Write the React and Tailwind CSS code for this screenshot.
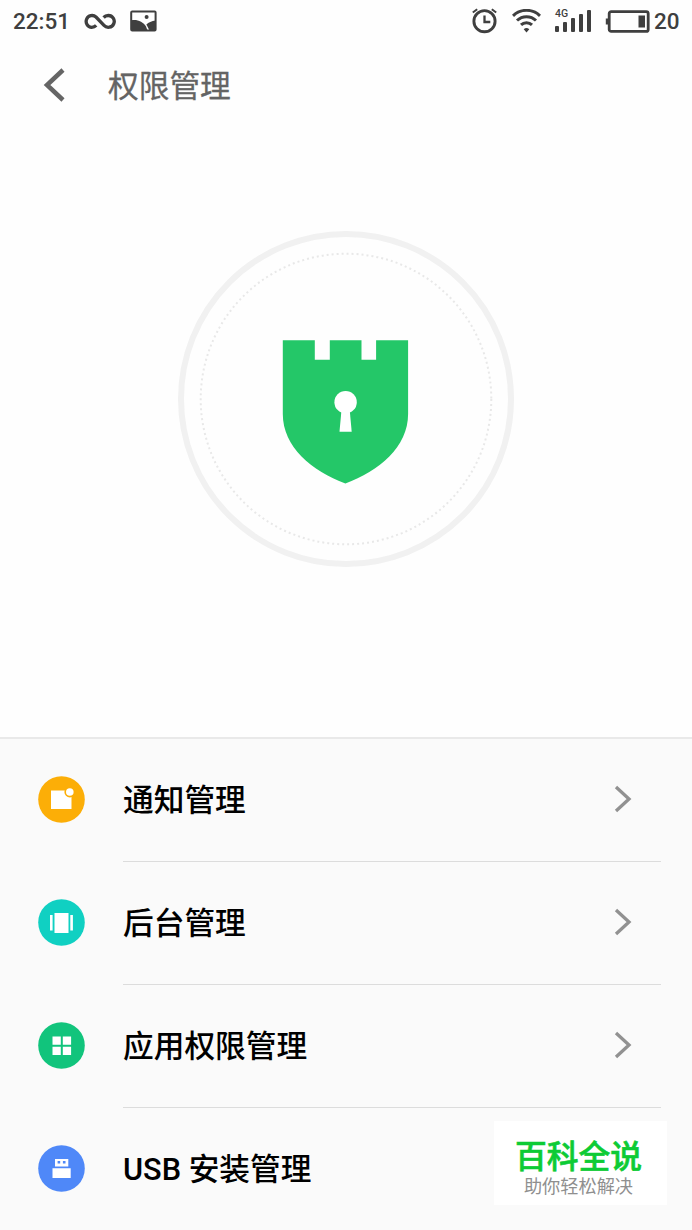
import { useState } from 'react';

const menuItems = [
  { id: 'notify', label: '通知管理', Icon: NotifyIcon },
  { id: 'background', label: '后台管理', Icon: BackgroundIcon },
  { id: 'apps', label: '应用权限管理', Icon: AppsIcon },
  { id: 'usb', label: 'USB 安装管理', Icon: UsbIcon },
];

function NotifyIcon() {
  return (
    <svg className="w-[47px] h-[47px] -mt-0.5" viewBox="0 0 47 47">
      <circle cx="23.5" cy="23.5" r="23.3" fill="#fcae07" />
      <path d="M13 14.5h20.5V33H13z" fill="#fff" />
      <circle cx="31.8" cy="16" r="5.4" fill="#fcae07" />
      <circle cx="31.8" cy="16" r="3.8" fill="#fff" />
    </svg>
  );
}

function BackgroundIcon() {
  return (
    <svg className="w-[47px] h-[47px] -mt-0.5" viewBox="0 0 47 47">
      <circle cx="23.5" cy="23.5" r="23.3" fill="#10d0c2" />
      <path d="M16.5 14h14v20h-14zM12 16h2.6v15.5H12zM32.3 16h2.6v15.5h-2.6z" fill="#fff" />
    </svg>
  );
}

function AppsIcon() {
  return (
    <svg className="w-[47px] h-[47px] -mt-0.5" viewBox="0 0 47 47">
      <circle cx="23.5" cy="23.5" r="23.3" fill="#11c47c" />
      <path d="M14.5 14.5h8.3v8.3h-8.3zM24.8 14.5h8.3v8.3h-8.3zM14.5 24.8h8.3v8.2h-8.3zM24.8 24.8h8.3v8.2h-8.3z" fill="#fff" />
    </svg>
  );
}

function UsbIcon() {
  return (
    <svg className="w-[47px] h-[47px] -mt-0.5" viewBox="0 0 47 47">
      <circle cx="23.5" cy="23.5" r="23.3" fill="#4f88f8" />
      <path d="M17 14h13.3v7.4H17zM14.5 23.2h18.2v9.9H14.5z" fill="#fff" />
      <path d="M19.6 16h2.6v2.6h-2.6zM24.9 16h2.6v2.6h-2.6z" fill="#4f88f8" />
    </svg>
  );
}

const StatusBar = () => (
  <div className="h-[43px] flex items-center justify-between px-[13px] text-[#3f3f3f] font-['Roboto',sans-serif] font-medium text-[22.5px]">
    <div className="flex items-center">
      <span className="w-[57px] pt-px">22:51</span>
      {/* Infinity */}
      <svg className="w-8 h-[18px] ml-[14px] mb-[2px]" viewBox="0 0 32 18" fill="none" stroke="currentColor" strokeWidth="3.3">
        <path d="M12.2 13.4C10.8 14.9 9.2 15.3 7.7 15.3A5.9 5.9 0 1 1 12 5L20 13.4A5.9 5.9 0 1 0 24.3 3.5C22.5 3.5 21 4 19.6 5.5" />
      </svg>
      {/* Picture */}
      <svg className="w-[27px] h-[22px] ml-[14px] mb-[2px]" viewBox="0 0 27 22">
        <rect x="1.2" y="1.4" width="24.4" height="19" rx="1" fill="#fff" stroke="currentColor" strokeWidth="2" />
        <path d="M1 10.5C7 9 13 12 16 16.5L17.5 20.6H1z" fill="currentColor" />
        <path d="M25.6 10.5C21.5 11 18.5 12.5 16.4 14.5L19.5 20.6h6z" fill="currentColor" />
        <circle cx="16.6" cy="6.9" r="2" fill="currentColor" />
      </svg>
    </div>
    <div className="flex items-center">
      {/* Alarm */}
      <svg className="w-[26px] h-[26px] mb-[2px]" viewBox="0 0 26 26" fill="none" stroke="currentColor">
        <circle cx="12.5" cy="13.2" r="10.6" strokeWidth="2.9" />
        <path d="M12.5 7.5v6.5h5.8" strokeWidth="2.3" />
        <path d="M.8 4.5 5.2 1.2M19.8 1.2l4.4 3.3" strokeWidth="2" />
      </svg>
      {/* Wifi */}
      <svg className="w-[29px] h-[24px] ml-[14px] mb-[2px]" viewBox="0 0 29 24" fill="none" stroke="currentColor" strokeWidth="3">
        <path d="M1 6.8a19.4 19.4 0 0 1 27 0" />
        <path d="M5 11.5a13.7 13.7 0 0 1 19 0" />
        <path d="M9 15.9a8 8 0 0 1 11 0" />
        <path d="M11.7 20.3 14.5 23.6l2.8-3.3a4.2 4.2 0 0 0-5.6 0z" fill="currentColor" stroke="none" />
      </svg>
      {/* Signal */}
      <div className="relative ml-[14px] mb-[2px] flex items-end gap-[4px] h-[23px] w-[36px]">
        <span className="absolute left-0 top-0 text-[10.5px] leading-[10px] font-medium">4G</span>
        <span className="w-[4px] h-[6px] rounded-[1px] bg-[#3f3f3f]" />
        <span className="w-[4px] h-[10px] rounded-[1px] bg-[#3f3f3f]" />
        <span className="w-[4px] h-[14px] rounded-[1px] bg-[#3f3f3f]" />
        <span className="w-[4px] h-[18px] rounded-[1px] bg-[#3f3f3f]" />
        <span className="w-[4px] h-[22px] rounded-[1px] bg-[#3f3f3f]" />
      </div>
      {/* Battery */}
      <svg className="w-[45px] h-[23px] ml-[14px] mb-px" viewBox="0 0 45 23">
        <rect x="4.2" y="1.6" width="39" height="19.8" rx="2" fill="none" stroke="currentColor" strokeWidth="2.8" />
        <path d="M.8 8.5h2.6v6H.8zM33.5 5.5H40v12h-6.5z" fill="currentColor" />
      </svg>
      <span className="ml-[4px] w-[25px] pt-px">20</span>
    </div>
  </div>
);

const Header = () => (
  <div className="h-[84px] flex items-center pl-[43px]">
    <button className="w-[22px] h-[34px]" aria-label="返回">
      <svg className="w-[22px] h-[34px]" viewBox="0 0 22 34" fill="none" stroke="#656565" strokeWidth="4.5">
        <path d="M20 2 4 17l16 15" />
      </svg>
    </button>
    <h1 className="ml-[43px] pt-[4px] text-[30.7px] leading-[44px] text-[#646464] [-webkit-text-stroke:0.3px_#646464]">权限管理</h1>
  </div>
);

const ShieldBadge = () => (
  <svg className="w-[340px] h-[340px]" viewBox="0 0 340 340">
    <circle cx="170" cy="170" r="165" fill="none" stroke="#f1f1f1" strokeWidth="6" />
    <circle cx="170" cy="170" r="145.3" fill="none" stroke="#e8e8e8" strokeWidth="2" strokeDasharray="2 3" />
    <path
      d="M106.8 111.3h32V130.8h15v-19.5h31.7V130.8h14.6v-19.5H232.1V185C232.1 218 203 242 169.4 254.5C136 242 106.8 218 106.8 185z"
      fill="#24c768"
    />
    <circle cx="169.6" cy="173.2" r="11.2" fill="#fff" />
    <path d="M165.4 182h8.4l1.9 20.8h-12.2z" fill="#fff" />
  </svg>
);

const MenuRow = ({ item, selected, last, onSelect }) => (
  <button
    className="flex items-center h-[123px] pl-[38px] w-full text-left"
    aria-current={selected}
    onClick={() => onSelect(item.id)}
  >
    <item.Icon />
    <div className={`ml-[38px] mr-[31px] h-full flex-1 flex items-center justify-between pr-[29px] border-b ${last ? 'border-transparent' : 'border-[#dcdcdc]'}`}>
      <span className="pt-[2px] text-[30.7px] leading-[44px] font-medium text-black">{item.label}</span>
      <svg className="w-[18px] h-[28px] -mt-[3px]" viewBox="0 0 18 28" fill="none" stroke="#919191" strokeWidth="3.3">
        <path d="M2 2l13 12L2 26" />
      </svg>
    </div>
  </button>
);

const App = () => {
  const [selected, setSelected] = useState(null);

  return (
    <div className="relative w-[692px] h-[1230px] overflow-hidden bg-[#fefefe] flex flex-col font-['Roboto','Noto_Sans_CJK_SC',sans-serif]">
      <StatusBar />
      <Header />

      <div className="h-[610px] shrink-0 flex justify-center pt-[102px] pr-px">
        <ShieldBadge />
      </div>

      {/* the last row runs on below the screen edge */}
      <div className="flex-1 min-h-0 bg-[#fafafa] border-t-2 border-[#e9e9e9]">
        {menuItems.map((item, i) => (
          <MenuRow
            key={item.id}
            item={item}
            selected={selected === item.id}
            last={i === menuItems.length - 1}
            onSelect={setSelected}
          />
        ))}
      </div>

      <div className="absolute left-[494px] top-[1121px] w-[173px] h-[84px] bg-white flex flex-col items-center">
        <span className="mt-[18px] -ml-[4px] text-[31.8px] leading-[36px] font-medium text-[#0dcb35] [-webkit-text-stroke:0.6px_#0dcb35]">百科全说</span>
        <span className="-ml-[4px] text-[18.2px] leading-[24px] text-[#8f8f8f]">助你轻松解决</span>
      </div>
    </div>
  );
};

export default App;
